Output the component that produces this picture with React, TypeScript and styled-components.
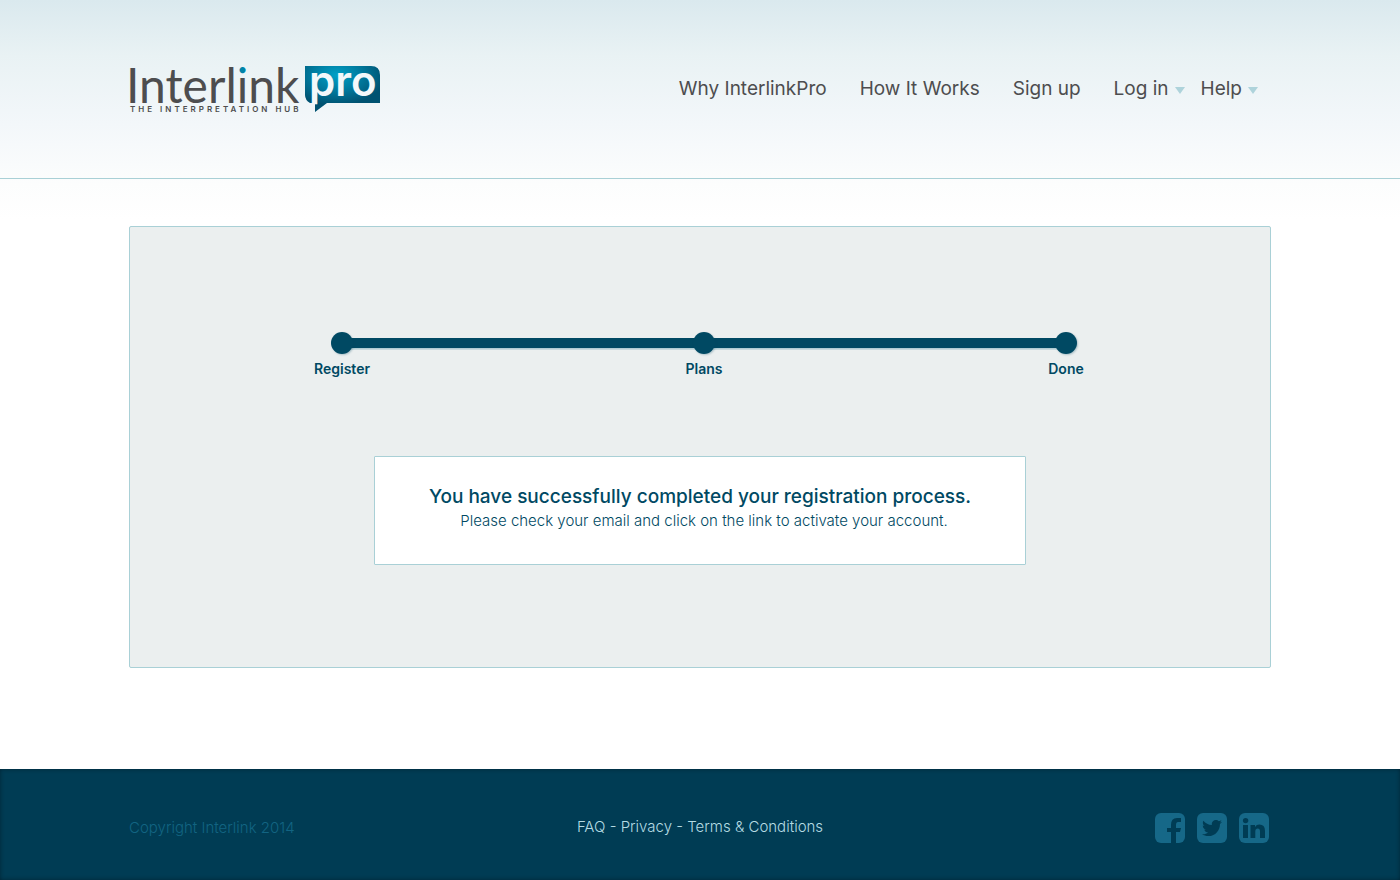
import React from "react";
import styled, { createGlobalStyle } from "styled-components";
import { FaTwitter } from "react-icons/fa";

const GlobalStyle = createGlobalStyle`
  * { box-sizing: border-box; }
  html, body { margin: 0; padding: 0; }
  body {
    background: #fff;
    color: #4d4d4f;
    font-family: "Inter", "Liberation Sans", sans-serif;
  }
`;

const Page = styled.div`
  min-height: 100vh;
  display: flex;
  flex-direction: column;
  background: linear-gradient(#dae9ee 0, #e9f2f4 56px, #f3f7fa 124px, #fcfdfd 184px, #fff 220px) no-repeat;
`;

const Container = styled.div`
  width: 100%;
  max-width: 1174px;
  margin: 0 auto;
  padding: 0 16px;
`;

const Header = styled.header`
  border-bottom: 1px solid #a9d0d6;
`;

const HeaderRow = styled(Container)`
  min-height: 178px;
  display: flex;
  align-items: center;
  justify-content: space-between;
`;

const LogoLink = styled.a`
  display: block;
  line-height: 0;
`;

const Nav = styled.nav`
  display: flex;
  align-items: center;
  gap: 33px;
  padding-right: 13px;
`;

const NavLink = styled.a`
  color: #4d4d4f;
  font-size: 19px;
  line-height: 24px;
  text-decoration: none;
`;

const Menus = styled.div`
  display: flex;
  gap: 16px;
`;

const MenuButton = styled.button`
  display: flex;
  align-items: center;
  gap: 6px;
  padding: 0;
  border: 0;
  background: none;
  color: #4d4d4f;
  font: inherit;
  font-size: 19px;
  line-height: 24px;
  cursor: pointer;
`;

const Caret = styled.span`
  margin-top: 3px;
  border: 5px solid transparent;
  border-top: 7px solid #aed3db;
  border-bottom: 0;
`;

const Main = styled(Container).attrs({ as: "main" })`
  flex: 1;
  padding-top: 47px;
  padding-bottom: 101px;
`;

const Panel = styled.section`
  display: flex;
  flex-direction: column;
  align-items: center;
  padding: 104px 16px 102px;
  border: 1px solid #a9d0d6;
  border-radius: 2px;
  background: #ebefef;
`;

const Steps = styled.ol`
  width: 100%;
  max-width: 804px;
  display: flex;
  justify-content: space-between;
  margin: 0 0 75px 8px;
  padding: 0;
  list-style: none;
  background: linear-gradient(#004963 0, #004963 10px, #a3c5cf 10px, #d2dfe2 12px) no-repeat 40px 7px / calc(100% - 80px) 12px;
`;

const Step = styled.li`
  width: 80px;
  display: flex;
  flex-direction: column;
  align-items: center;
  gap: 3px;
  color: #004963;
  font-size: 14px;
  font-weight: 600;
  line-height: 24px;
`;

const Dot = styled.span`
  width: 22px;
  height: 22px;
  margin-top: 1px;
  border-radius: 50%;
  background: #004963;
  box-shadow: 1px 1px 2px #00496344;
`;

const Message = styled.div`
  width: 100%;
  max-width: 652px;
  padding: 28px 16px 31px;
  border: 1px solid #a9d0d6;
  border-radius: 1px;
  background: #fff;
  color: #004963;
  text-align: center;
`;

const MessageTitle = styled.h1`
  margin: 0;
  font-size: 19px;
  font-weight: 500;
  line-height: 24px;
`;

const MessageText = styled.p`
  margin: 0 0 0 8px;
  font-size: 15px;
  font-weight: 300;
  line-height: 24px;
`;

const Footer = styled.footer`
  background: #003c54;
  box-shadow: inset 0 0 4px #001f2ccc;
`;

const FooterRow = styled(Container)`
  min-height: 111px;
  display: grid;
  grid-template-columns: 1fr auto 1fr;
  align-items: center;
  padding-top: 6px;
  font-size: 15px;
  font-weight: 300;
  line-height: 20px;
`;

const Copyright = styled.span`
  color: #126482;
`;

const FooterNav = styled.nav`
  padding-bottom: 2px;
  color: #b4dbe3;
`;

const FooterLink = styled.a`
  color: inherit;
  text-decoration: none;
`;

const Social = styled.div`
  display: flex;
  justify-content: flex-end;
  gap: 12px;
  padding-right: 2px;
`;

const SocialLink = styled.a`
  width: 30px;
  height: 30px;
  display: flex;
  align-items: center;
  justify-content: center;
  border-radius: 6px;
  background: #166888;
  color: #003c54;
`;

const LogoDrawing = styled.svg`
  display: block;
  overflow: visible;
`;

const Logo = () => (
  <LogoDrawing width="252" height="48" viewBox="0 0 252 48" role="img" aria-label="InterlinkPro, the interpretation hub">
    <defs>
      <radialGradient id="bubble" cx="0.42" cy="0.2" r="0.65">
        <stop offset="0" stopColor="#00a0c6" />
        <stop offset="0.5" stopColor="#007b9f" />
        <stop offset="1" stopColor="#005271" />
      </radialGradient>
      <linearGradient id="dotted" gradientUnits="userSpaceOnUse" x1="0" y1="0" x2="0" y2="20">
        <stop offset="0.5" stopColor="#0083a8" />
        <stop offset="0.5" stopColor="#4d4d4f" />
      </linearGradient>
    </defs>
    <text x="-3" y="38" fontFamily="Lato, sans-serif" fontSize="48" fill="#4d4d4f">
      Interl<tspan fill="url(#dotted)">i</tspan>nk
    </text>
    <text x="1" y="47" fontFamily="Inter, sans-serif" fontSize="8" fontWeight="600" letterSpacing="3" fill="#4d4d4f">THE INTERPRETATION HUB</text>
    <path
      d="M176 1H242Q251 1 251 10V38H198L186 47V38H181Q176 35 176 30Z"
      fill="url(#bubble)"
    />
    <text x="180" y="31" fontFamily="Inter, sans-serif" fontSize="42" fontWeight="600" fill="#f3f8fa">pro</text>
  </LogoDrawing>
);

const FacebookIcon = () => (
  <svg width="30" height="30" viewBox="0 0 30 30" fill="currentColor" aria-hidden="true">
    <path d="M16 30V19H12V15H16V12Q16 5 22 5H26V9H23Q21 9 21 12V15H26L25 19H21V30Z" />
  </svg>
);

const LinkedinIcon = () => (
  <svg width="30" height="30" viewBox="0 0 30 30" fill="currentColor" aria-hidden="true">
    <circle cx="6.6" cy="7.6" r="2.7" />
    <path d="M4 12H9V25H4ZM11.500 12H16V14Q17.500 11.600 20.300 11.600Q26 11.600 26 18V25H21V18.500Q21 15.500 18.700 15.500Q16.300 15.500 16.300 18.500V25H11.500Z" />
  </svg>
);

const steps = ["Register", "Plans", "Done"];

export default function App() {
  return (
    <Page>
      <GlobalStyle />
      <Header>
        <HeaderRow>
          <LogoLink href="#home"><Logo /></LogoLink>
          <Nav aria-label="Main">
            <NavLink href="#why">Why InterlinkPro</NavLink>
            <NavLink href="#how">How It Works</NavLink>
            <NavLink href="#signup">Sign up</NavLink>
            <Menus>
              <MenuButton type="button" aria-haspopup="menu">Log in<Caret /></MenuButton>
              <MenuButton type="button" aria-haspopup="menu">Help<Caret /></MenuButton>
            </Menus>
          </Nav>
        </HeaderRow>
      </Header>
      <Main>
        <Panel>
          <Steps>
            {steps.map((label) => (
              <Step key={label}><Dot />{label}</Step>
            ))}
          </Steps>
          <Message role="status">
            <MessageTitle>You have successfully completed your registration process.</MessageTitle>
            <MessageText>Please check your email and click on the link to activate your account.</MessageText>
          </Message>
        </Panel>
      </Main>
      <Footer>
        <FooterRow>
          <Copyright>Copyright Interlink 2014</Copyright>
          <FooterNav aria-label="Footer">
            <FooterLink href="#faq">FAQ</FooterLink> - <FooterLink href="#privacy">Privacy</FooterLink> - <FooterLink href="#terms">Terms &amp; Conditions</FooterLink>
          </FooterNav>
          <Social>
            <SocialLink href="#facebook" aria-label="Facebook"><FacebookIcon /></SocialLink>
            <SocialLink href="#twitter" aria-label="Twitter"><FaTwitter size={20} /></SocialLink>
            <SocialLink href="#linkedin" aria-label="LinkedIn"><LinkedinIcon /></SocialLink>
          </Social>
        </FooterRow>
      </Footer>
    </Page>
  );
}
